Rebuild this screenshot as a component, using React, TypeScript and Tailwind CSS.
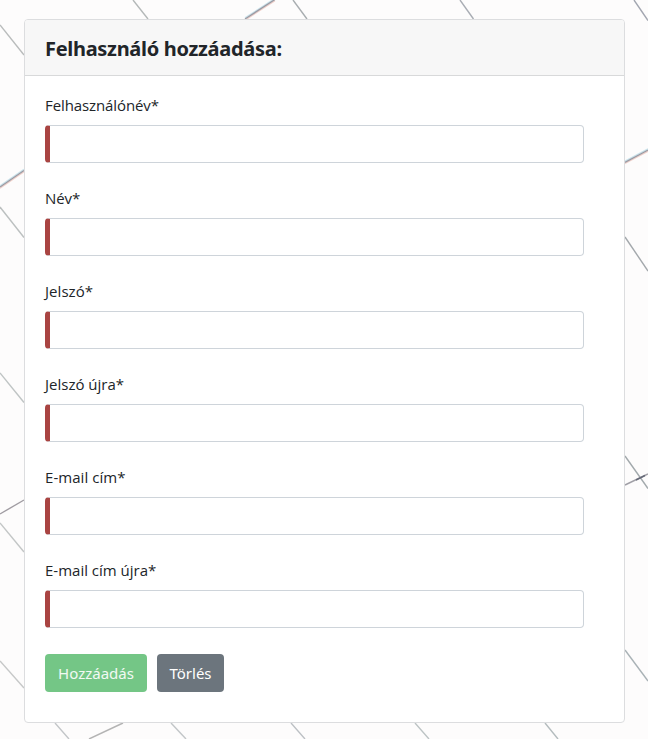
const fields = [
  { label: 'Felhasználónév*', tracking: 'tracking-[-0.1px]' },
  { label: 'Név*', tracking: 'tracking-[-0.1px]' },
  { label: 'Jelszó*', tracking: 'tracking-[0.05px]' },
  { label: 'Jelszó újra*', tracking: 'tracking-[0px]' },
  { label: 'E-mail cím*', tracking: 'tracking-[0.05px]' },
  { label: 'E-mail cím újra*', tracking: 'tracking-[0px]' },
];

// Thin seams between the backdrop tiles: x1, y1, x2, y2, colour
const seams: [number, number, number, number, string][] = [
  [0, 25, 24, 55, '#b9bcbc'],
  [133, 0, 148, 19, '#b4b8b8'],
  [293, 0, 307, 19, '#a8adb0'],
  [460, 0, 473.5, 19, '#a9adb4'],
  [634, 0, 648, 20.5, '#a2a6b0'],
  [0, 207, 24, 237.5, '#bcc0c0'],
  [0, 373, 24, 402.5, '#bfc4c4'],
  [0, 514, 24, 500, '#a09ca2'],
  [0, 523, 24, 552, '#c3c6c6'],
  [0, 661, 24, 688, '#c6c8c8'],
  [55, 723, 69, 739, '#c2c5c8'],
  [89, 739, 123, 723, '#b4b4b4'],
  [171, 723, 186, 739, '#c2c6c8'],
  [291, 723, 305, 739, '#bcc0c4'],
  [415, 723, 429, 739, '#bcc3c4'],
  [545, 723, 558, 739, '#b4bcbe'],
  [625, 237, 648, 271, '#a3a8ac'],
  [625, 456, 648, 488.5, '#a2a9ac'],
  [625, 485, 648, 474, '#a09fa6'],
  [636, 480, 645, 475.5, '#666a78'],
  [625, 650, 648, 681, '#a9b2b6'],
];

const thickSeams: [number, number, number, number][] = [
  [245, 19, 275, -0.5],
  [0, 187, 24, 170.5],
  [625, 162.3, 648, 150],
];

function Backdrop() {
  return (
    <svg className="absolute inset-0 h-full w-full" viewBox="0 0 648 739">
      {seams.map(([x1, y1, x2, y2, c], i) => (
        <line key={i} x1={x1} y1={y1} x2={x2} y2={y2} stroke={c} strokeWidth="1.4" />
      ))}
      {thickSeams.map(([x1, y1, x2, y2], i) => (
        <g key={i}>
          <line x1={x1} y1={y1 - 1.2} x2={x2} y2={y2 - 1.2} stroke="#c9e3ec" strokeWidth="1.2" />
          <line x1={x1} y1={y1 + 1.2} x2={x2} y2={y2 + 1.2} stroke="#f0cfc8" strokeWidth="1.2" />
          <line x1={x1} y1={y1} x2={x2} y2={y2} stroke="#9a9aa3" strokeWidth="1.4" />
        </g>
      ))}
    </svg>
  );
}

export default function App() {
  return (
    <div className="relative h-[739px] w-[648px] overflow-hidden bg-[#fdfcfc] pt-[19px] pl-6 font-['Noto_Sans','Open_Sans',sans-serif] text-base text-[#212529]">
      <Backdrop />
      <div className="relative flex h-[704px] w-[601px] flex-col overflow-hidden rounded border border-[#dcdddf] bg-white">
        <div className="h-14 border-b border-[#d8d9da] bg-[#f7f7f7] px-5 pt-3">
          <h1 className="text-[20px] leading-[33px] font-bold tracking-[-0.3px] whitespace-nowrap">Felhasználó hozzáadása:</h1>
        </div>
        <form className="flex flex-col pt-[17px] pl-5">
          {fields.map((f) => (
            <label key={f.label} className="flex h-[93px] flex-col">
              <span className={`h-8 font-['Open_Sans','Noto_Sans',sans-serif] text-[15px] leading-6 font-normal whitespace-nowrap ${f.tracking}`}>{f.label}</span>
              <input className="h-[38px] w-[539px] rounded border border-l-[5px] border-[#ced4da] border-l-[#a94442] bg-white outline-none" />
            </label>
          ))}
          <div className="flex gap-2.5 pt-[3px] text-[15px] text-white">
            <button type="button" className="h-[38px] w-[102px] rounded bg-[#74c686] text-white/90">Hozzáadás</button>
            <button type="button" className="h-[38px] w-[67px] rounded bg-[#6c757d]">Törlés</button>
          </div>
        </form>
      </div>
    </div>
  );
}
